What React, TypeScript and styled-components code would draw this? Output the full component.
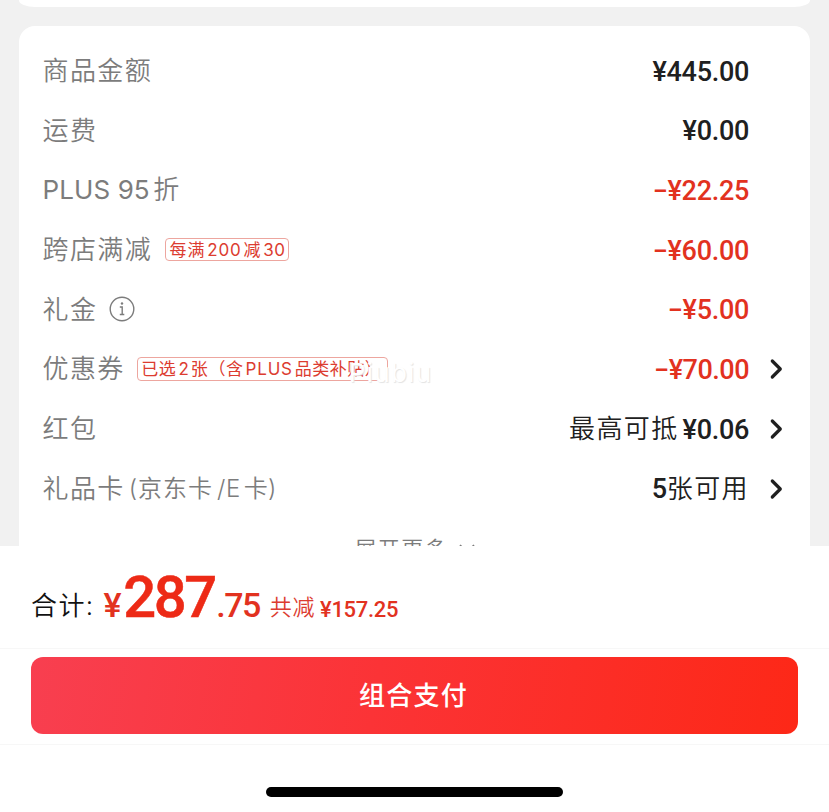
import React from "react";
import styled, { createGlobalStyle } from "styled-components";

const GlobalStyle = createGlobalStyle`
  * { box-sizing: border-box; }
  body { margin: 0; background: #f1f1f1; font-family: Inter, "Noto Sans CJK SC", sans-serif; }
`;

const Page = styled.div`
  width: 829px;
  height: 812px;
  display: flex;
  flex-direction: column;
  overflow: hidden;
  background: #f1f1f1;
`;

const Scroll = styled.main`
  flex: 0 0 546px;
  padding: 0 19px;
  overflow: hidden;
`;

const PreviousCard = styled.div`
  height: 6.5px;
  margin-bottom: 19px;
  background: #fff;
  border-radius: 0 0 16px 16px / 0 0 6.5px 6.5px;
`;

const Card = styled.section`
  height: 560px;
  padding: 15.7px 27px 0 23.5px;
  background: #fff;
  border-radius: 16px;
`;

const Row = styled.div`
  height: 59.7px;
  display: flex;
  align-items: center;
  justify-content: space-between;
  white-space: nowrap;
`;

const Side = styled.div`
  display: flex;
  align-items: center;
`;

const Text = styled.span<{ $size?: number; $gap?: number; $color?: string; $left?: number; $weight?: number }>`
  font-size: ${(p) => p.$size ?? 26}px;
  line-height: 40px;
  letter-spacing: ${(p) => p.$gap ?? 1.4}px;
  color: ${(p) => p.$color ?? "#7c7c7c"};
  margin-left: ${(p) => p.$left ?? 0}px;
  font-weight: ${(p) => p.$weight ?? 350};
  white-space: pre;
`;

const Amount = styled.span<{ $red?: boolean; $size?: number; $left?: number; $gap?: number }>`
  padding-top: 1px;
  font-family: Roboto, sans-serif;
  font-weight: 500;
  font-size: ${(p) => p.$size ?? 27}px;
  line-height: 40px;
  letter-spacing: ${(p) => p.$gap ?? -0.3}px;
  margin-left: ${(p) => p.$left ?? 0}px;
  color: ${(p) => (p.$red ? "#e2321f" : "#202020")};
`;

const Tag = styled.span<{ $width: number; $left: number }>`
  position: relative;
  width: ${(p) => p.$width}px;
  height: 23.5px;
  margin: 0 0 1px ${(p) => p.$left}px;
  padding-left: 3.5px;
  display: flex;
  align-items: center;
  border: 1px solid #eda69f;
  border-radius: 4px;
`;

const TagText = styled(Text)`
  font-size: 17px;
  font-weight: 400;
  line-height: 20px;
  color: #dc3c30;
`;

const Watermark = styled.span`
  position: absolute;
  left: 211px;
  top: -1px;
  font-size: 26px;
  line-height: 32px;
  letter-spacing: 1.3px;
  color: #fff;
  text-shadow: 1px 1px 1px #e4e4e4;
`;

const ArrowSlot = styled.span`
  width: 34px;
  height: 24px;
  display: flex;
  justify-content: flex-end;
  align-items: center;
`;

const InfoIcon = styled.svg`
  margin-left: 12px;
  margin-bottom: 1px;
`;

const More = styled.div`
  height: 60px;
  padding: 0 0 0 7px;
  display: flex;
  align-items: center;
  justify-content: center;
  gap: 8px;
`;

const Footer = styled.footer`
  flex: 1;
  background: #fff;
  display: flex;
  flex-direction: column;
  align-items: center;
`;

const Total = styled.div`
  align-self: stretch;
  height: 102px;
  padding: 15.5px 0 0 31px;
  display: flex;
  align-items: baseline;
  white-space: nowrap;
`;

const Raised = styled(Text)`
  position: relative;
  top: -2px;
`;

const Big = styled.span`
  margin-left: 2px;
  font: 500 58px/70px Roboto, sans-serif;
  letter-spacing: -2.5px;
  color: #ed2a16;
  -webkit-text-stroke: 0.5px #ed2a16;
`;

const ButtonArea = styled.div`
  align-self: stretch;
  height: 97px;
  padding: 8px 31px 0;
  border-top: 1px solid #f7f7f7;
  border-bottom: 1px solid #f7f7f7;
`;

const PayButton = styled.button`
  display: flex;
  align-items: center;
  justify-content: center;
  width: 767px;
  height: 77px;
  padding: 0 2px 3px 0;
  border: 0;
  border-radius: 12px;
  background: linear-gradient(100deg, #f83f50 0%, #fb3336 45%, #fd2817 100%);
  color: #fff;
  font: 500 26px/40px "Noto Sans CJK SC", sans-serif;
  letter-spacing: 1.2px;
`;

const HomeBar = styled.div`
  width: 297px;
  height: 10px;
  margin-top: 42px;
  border-radius: 5px;
  background: #000;
`;

const Arrow = () => (
  <ArrowSlot>
    <svg width="14" height="22" viewBox="0 0 14 22" fill="none" stroke="#202020" strokeWidth="3.2" strokeLinecap="round" strokeLinejoin="round">
      <path d="M3.3 3 11.3 11 3.3 19" />
    </svg>
  </ArrowSlot>
);

interface LineProps {
  label: React.ReactNode;
  value: React.ReactNode;
  arrow?: boolean;
}

const ValueSide = styled(Side)<{ $arrow?: boolean }>`
  padding-right: ${(p) => (p.$arrow ? 0 : 34)}px;
`;

const Line = ({ label, value, arrow }: LineProps) => (
  <Row>
    <Side>{label}</Side>
    <ValueSide $arrow={arrow}>
      {value}
      {arrow && <Arrow />}
    </ValueSide>
  </Row>
);

export default function App() {
  return (
    <Page>
      <GlobalStyle />
      <Scroll>
        <PreviousCard />
        <Card>
          <Line label={<Text>商品金额</Text>} value={<Amount>¥445.00</Amount>} />
          <Line label={<Text>运费</Text>} value={<Amount>¥0.00</Amount>} />
          <Line label={<><Text $gap={0.1} $weight={400}>PLUS 95</Text><Text $left={3.5}>折</Text></>} value={<Amount $red>−¥22.25</Amount>} />
          <Line
            label={
              <>
                <Text>跨店满减</Text>
                <Tag $width={124} $left={13}>
                  <TagText $gap={0.8}>每满</TagText>
                  <TagText $gap={0.8} $left={2}>200</TagText>
                  <TagText $gap={0.8} $left={2}>减</TagText>
                  <TagText $gap={0.5} $left={2}>30</TagText>
                </Tag>
              </>
            }
            value={<Amount $red>−¥60.00</Amount>}
          />
          <Line
            label={
              <>
                <Text>礼金</Text>
                <InfoIcon width="26" height="26" viewBox="0 0 26 26" fill="none" stroke="#7c7c7c" strokeWidth="1.4">
                  <circle cx="13" cy="13" r="11.8" />
                  <path d="M10.8 11h2.4v7.5M10.8 18.5h4.5" />
                  <circle cx="13" cy="7.5" r="1.2" fill="#7c7c7c" stroke="none" />
                </InfoIcon>
              </>
            }
            value={<Amount $red>−¥5.00</Amount>}
          />
          <Line
            arrow
            label={
              <>
                <Text>优惠券</Text>
                <Tag $width={251} $left={12}>
                  <TagText $gap={0.6}>已选</TagText>
                  <TagText $gap={0} $left={2}>2</TagText>
                  <TagText $gap={0.6} $left={2}>张（含</TagText>
                  <TagText $gap={0.8} $left={2}>PLUS</TagText>
                  <TagText $gap={0.5} $left={2}>品类补贴）</TagText>
                  <Watermark>Piubiu</Watermark>
                </Tag>
              </>
            }
            value={<Amount $red $gap={-0.5}>−¥70.00</Amount>}
          />
          <Line
            arrow
            label={<Text>红包</Text>}
            value={<><Text $color="#202020">最高可抵</Text><Amount $left={4}>¥0.06</Amount></>}
          />
          <Line
            arrow
            label={<><Text>礼品卡</Text><Text $size={24} $gap={1} $left={4}>(京东卡</Text><Text $size={24} $gap={0.5} $left={4}>/E</Text><Text $size={24} $gap={0.3} $left={3}>卡)</Text></>}
            value={<><Amount>5</Amount><Text $color="#202020">张可用</Text></>}
          />
          <More>
            <Text $size={22}>展开更多</Text>
            <svg width="22" height="14" viewBox="0 0 22 14" fill="none" stroke="#7c7c7c" strokeWidth="1.6"><path d="m4 3 7 7 7-7" /></svg>
          </More>
        </Card>
      </Scroll>
      <Footer>
        <Total>
          <Raised $color="#111">合计:</Raised>
          <Amount $red $size={34} $left={9}>¥</Amount>
          <Big>287</Big>
          <Amount $red $size={34} $left={1.5} $gap={-1.5}>.75</Amount>
          <Raised $size={22} $gap={0.6} $left={10} $color="#dc3c30">共减</Raised>
          <Amount $red $size={22} $left={5}>¥157.25</Amount>
        </Total>
        <ButtonArea>
          <PayButton>组合支付</PayButton>
        </ButtonArea>
        <HomeBar />
      </Footer>
    </Page>
  );
}
